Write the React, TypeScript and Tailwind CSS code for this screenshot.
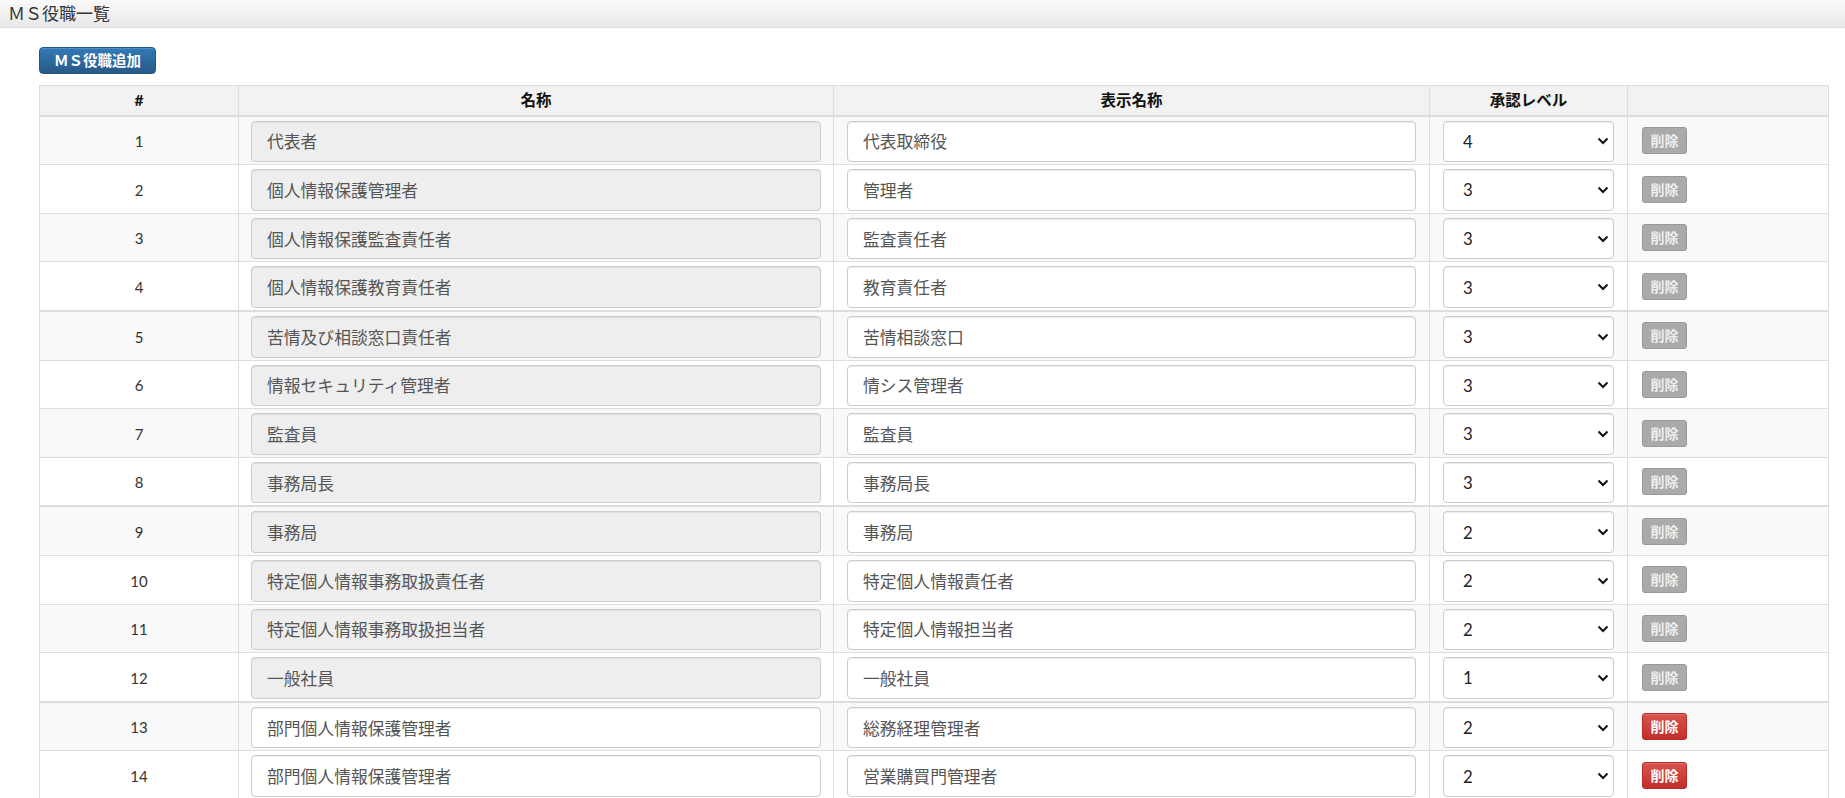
import React from "react";

type Role = {
  no: number;
  name: string;
  label: string;
  level: number;
  custom?: boolean;
};

const roles: Role[] = [
  { no: 1, name: "代表者", label: "代表取締役", level: 4 },
  { no: 2, name: "個人情報保護管理者", label: "管理者", level: 3 },
  { no: 3, name: "個人情報保護監査責任者", label: "監査責任者", level: 3 },
  { no: 4, name: "個人情報保護教育責任者", label: "教育責任者", level: 3 },
  { no: 5, name: "苦情及び相談窓口責任者", label: "苦情相談窓口", level: 3 },
  { no: 6, name: "情報セキュリティ管理者", label: "情シス管理者", level: 3 },
  { no: 7, name: "監査員", label: "監査員", level: 3 },
  { no: 8, name: "事務局長", label: "事務局長", level: 3 },
  { no: 9, name: "事務局", label: "事務局", level: 2 },
  { no: 10, name: "特定個人情報事務取扱責任者", label: "特定個人情報責任者", level: 2 },
  { no: 11, name: "特定個人情報事務取扱担当者", label: "特定個人情報担当者", level: 2 },
  { no: 12, name: "一般社員", label: "一般社員", level: 1 },
  { no: 13, name: "部門個人情報保護管理者", label: "総務経理管理者", level: 2, custom: true },
  { no: 14, name: "部門個人情報保護管理者", label: "営業購買門管理者", level: 2, custom: true },
];

// rows are grouped four per tbody, separated by a heavier rule
const groups: Role[][] = [];
for (let i = 0; i < roles.length; i += 4) groups.push(roles.slice(i, i + 4));

function Chevron() {
  return (
    <svg width="12" height="8" viewBox="0 0 12 8" className="pointer-events-none absolute right-[5px] top-1/2 -translate-y-1/2">
      <path d="M1.5 1.5 L6 6 L10.5 1.5" fill="none" stroke="#111" strokeWidth="2" />
    </svg>
  );
}

function RoleRow({ role, index, first }: { role: Role; index: number; first: boolean }) {
  const stripe = index % 2 === 0 ? "bg-[#f9f9f9]" : "bg-white";
  const top = first ? "border-t-2" : "border-t";
  const cell = `${top} border-x border-b border-[#dddddd] p-0`;
  return (
    <tr className={stripe}>
      <td className={cell}>
        <div className="flex h-[47.6px] items-center justify-center pt-[2px] text-[15px] text-[#333]">{role.no}</div>
      </td>
      <td className={cell}>
        <div className="flex h-[47.6px] items-start px-[12px] pt-[4px]">
          <input
            readOnly={!role.custom}
            defaultValue={role.name}
            className={`h-[41.5px] w-full rounded-[4px] border border-[#cccccc] px-[15px] text-[16.8px] text-[#555] shadow-[inset_0_1px_1px_rgba(0,0,0,0.075)] outline-none ${
              role.custom ? "bg-white" : "bg-[#eeeeee]"
            }`}
          />
        </div>
      </td>
      <td className={cell}>
        <div className="flex h-[47.6px] items-start px-[13px] pt-[4px]">
          <input
            defaultValue={role.label}
            className="h-[41.5px] w-full rounded-[4px] border border-[#cccccc] bg-white px-[15px] text-[16.8px] text-[#555] shadow-[inset_0_1px_1px_rgba(0,0,0,0.075)] outline-none"
          />
        </div>
      </td>
      <td className={cell}>
        <div className="flex h-[47.6px] items-start px-[13px] pt-[4px]">
          <div className="relative w-full">
            <select
              defaultValue={role.level}
              className="h-[41.5px] w-full appearance-none rounded-[4px] border border-[#cccccc] bg-white pl-[19px] text-[16.8px] text-[#222] shadow-[inset_0_1px_1px_rgba(0,0,0,0.075)] outline-none"
            >
              {[1, 2, 3, 4, 5].map((n) => (
                <option key={n} value={n}>
                  {n}
                </option>
              ))}
            </select>
            <Chevron />
          </div>
        </div>
      </td>
      <td className={cell}>
        <div className="flex h-[47.6px] items-center pl-[14px]">
          {role.custom ? (
            <button className="flex h-[27px] w-[45px] items-center justify-center rounded-[3px] border border-[#b92c28] bg-gradient-to-b from-[#d9534f] to-[#c12e2a] text-[14px] font-bold text-white shadow-[inset_0_1px_0_rgba(255,255,255,0.15)]">
              削除
            </button>
          ) : (
            <button className="flex h-[27px] w-[45px] items-center justify-center rounded-[3px] border border-[#999999] bg-[#aaaaaa] text-[14px] font-bold text-[#eeeeee]">
              削除
            </button>
          )}
        </div>
      </td>
    </tr>
  );
}

export default function App() {
  return (
    <div className="min-h-screen bg-white font-['Lato','Noto_Sans_CJK_JP',sans-serif] text-[#333]">
      <div className="flex h-[28px] items-center border-b border-[#dcdcdc] bg-gradient-to-b from-[#fafafa] to-[#e8e8e8] pl-[8px] text-[17px] leading-none text-[#333]">
        ＭＳ役職一覧
      </div>

      <div className="pl-[39px] pr-[18px] pt-[19px]">
        <button className="flex h-[27px] w-[117px] items-center justify-center rounded-[4px] border border-[#245580] bg-gradient-to-b from-[#337ab7] to-[#265a88] text-[14.5px] font-bold text-white shadow-[inset_0_1px_0_rgba(255,255,255,0.15)]">
          ＭＳ役職追加
        </button>

        <table className="mt-[11px] w-[1789px] table-fixed border-collapse">
          <colgroup>
            <col className="w-[199px]" />
            <col className="w-[595px]" />
            <col className="w-[596px]" />
            <col className="w-[198px]" />
            <col className="w-[201px]" />
          </colgroup>
          <thead>
            <tr className="bg-[#f2f2f2]">
              {["#", "名称", "表示名称", "承認レベル", ""].map((h, i) => (
                <th key={i} className="border border-b-2 border-[#dddddd] p-0">
                  <div className="flex h-[28.7px] items-center justify-center text-[15.5px] font-bold text-[#111]">{h}</div>
                </th>
              ))}
            </tr>
          </thead>
          {groups.map((g, gi) => (
            <tbody key={gi}>
              {g.map((r, ri) => (
                <RoleRow key={r.no} role={r} index={ri} first={ri === 0} />
              ))}
            </tbody>
          ))}
        </table>
      </div>
    </div>
  );
}
